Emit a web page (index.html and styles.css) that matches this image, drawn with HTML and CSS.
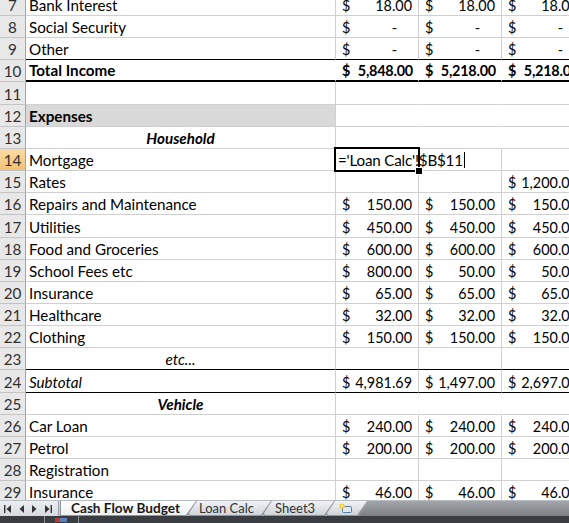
FILE: index.html
```
<!DOCTYPE html>
<html>
<head>
<meta charset="utf-8">
<link rel="stylesheet" href="styles.css">
</head>
<body>
<div class="grid">
<div class="rows">
  <div class="row"><div class="rh">7</div><div class="c">Bank Interest</div><div class="c n"><span>$</span><span>18.00</span></div><div class="c n"><span>$</span><span>18.00</span></div><div class="c n"><span>$</span><span>18.00</span></div></div>
  <div class="row"><div class="rh">8</div><div class="c">Social Security</div><div class="c n"><span>$</span><span class="dash">-</span></div><div class="c n"><span>$</span><span class="dash">-</span></div><div class="c n"><span>$</span><span class="dash">-</span></div></div>
  <div class="row kb"><div class="rh">9</div><div class="c">Other</div><div class="c n"><span>$</span><span class="dash">-</span></div><div class="c n"><span>$</span><span class="dash">-</span></div><div class="c n"><span>$</span><span class="dash">-</span></div></div>
  <div class="row kb2 bold"><div class="rh">10</div><div class="c nv">Total Income</div><div class="c n nv"><span>$</span><span>5,848.00</span></div><div class="c n nv"><span>$</span><span>5,218.00</span></div><div class="c n"><span>$</span><span>5,218.00</span></div></div>
  <div class="row"><div class="rh">11</div><div class="c"></div><div class="c nv"></div><div class="c nv"></div><div class="c"></div></div>
  <div class="row"><div class="rh">12</div><div class="c gray b">Expenses</div><div class="c nv"></div><div class="c nv"></div><div class="c"></div></div>
  <div class="row"><div class="rh">13</div><div class="c ctr b i">Household</div><div class="c nv"></div><div class="c nv"></div><div class="c"></div></div>
  <div class="row"><div class="rh sel">14</div><div class="c">Mortgage</div><div class="c edit">='Loan Calc'!$B$11<span class="caret"></span></div><div class="c"></div><div class="c"></div></div>
  <div class="row"><div class="rh">15</div><div class="c">Rates</div><div class="c"></div><div class="c"></div><div class="c n"><span>$</span><span>1,200.00</span></div></div>
  <div class="row"><div class="rh">16</div><div class="c">Repairs and Maintenance</div><div class="c n"><span>$</span><span>150.00</span></div><div class="c n"><span>$</span><span>150.00</span></div><div class="c n"><span>$</span><span>150.00</span></div></div>
  <div class="row"><div class="rh">17</div><div class="c">Utilities</div><div class="c n"><span>$</span><span>450.00</span></div><div class="c n"><span>$</span><span>450.00</span></div><div class="c n"><span>$</span><span>450.00</span></div></div>
  <div class="row"><div class="rh">18</div><div class="c">Food and Groceries</div><div class="c n"><span>$</span><span>600.00</span></div><div class="c n"><span>$</span><span>600.00</span></div><div class="c n"><span>$</span><span>600.00</span></div></div>
  <div class="row"><div class="rh">19</div><div class="c">School Fees etc</div><div class="c n"><span>$</span><span>800.00</span></div><div class="c n"><span>$</span><span>50.00</span></div><div class="c n"><span>$</span><span>50.00</span></div></div>
  <div class="row"><div class="rh">20</div><div class="c">Insurance</div><div class="c n"><span>$</span><span>65.00</span></div><div class="c n"><span>$</span><span>65.00</span></div><div class="c n"><span>$</span><span>65.00</span></div></div>
  <div class="row"><div class="rh">21</div><div class="c">Healthcare</div><div class="c n"><span>$</span><span>32.00</span></div><div class="c n"><span>$</span><span>32.00</span></div><div class="c n"><span>$</span><span>32.00</span></div></div>
  <div class="row"><div class="rh">22</div><div class="c">Clothing</div><div class="c n"><span>$</span><span>150.00</span></div><div class="c n"><span>$</span><span>150.00</span></div><div class="c n"><span>$</span><span>150.00</span></div></div>
  <div class="row kb"><div class="rh">23</div><div class="c ctr i">etc...</div><div class="c"></div><div class="c"></div><div class="c"></div></div>
  <div class="row kb"><div class="rh">24</div><div class="c i">Subtotal</div><div class="c n"><span>$</span><span>4,981.69</span></div><div class="c n"><span>$</span><span>1,497.00</span></div><div class="c n"><span>$</span><span>2,697.00</span></div></div>
  <div class="row"><div class="rh">25</div><div class="c ctr b i">Vehicle</div><div class="c nv"></div><div class="c nv"></div><div class="c"></div></div>
  <div class="row"><div class="rh">26</div><div class="c">Car Loan</div><div class="c n"><span>$</span><span>240.00</span></div><div class="c n"><span>$</span><span>240.00</span></div><div class="c n"><span>$</span><span>240.00</span></div></div>
  <div class="row"><div class="rh">27</div><div class="c">Petrol</div><div class="c n"><span>$</span><span>200.00</span></div><div class="c n"><span>$</span><span>200.00</span></div><div class="c n"><span>$</span><span>200.00</span></div></div>
  <div class="row"><div class="rh">28</div><div class="c">Registration</div><div class="c"></div><div class="c"></div><div class="c"></div></div>
  <div class="row"><div class="rh">29</div><div class="c">Insurance</div><div class="c n"><span>$</span><span>46.00</span></div><div class="c n"><span>$</span><span>46.00</span></div><div class="c n"><span>$</span><span>46.00</span></div></div>
</div>
</div>
<div class="tabbar">
  <div class="nav">
    <svg width="7" height="8" viewBox="0 0 7 8"><rect x="0" y="0" width="1.4" height="8" fill="#333"/><path d="M7 0 L2.5 4 L7 8 Z" fill="#333"/></svg>
    <svg width="5" height="8" viewBox="0 0 5 8"><path d="M5 0 L0.5 4 L5 8 Z" fill="#333"/></svg>
    <svg width="5" height="8" viewBox="0 0 5 8"><path d="M0 0 L4.5 4 L0 8 Z" fill="#333"/></svg>
    <svg width="7" height="8" viewBox="0 0 7 8"><path d="M0 0 L4.5 4 L0 8 Z" fill="#333"/><rect x="5.6" y="0" width="1.4" height="8" fill="#333"/></svg>
  </div>
  <div class="tabs">
    <div class="tab active"><div class="tab-in">Cash Flow Budget</div></div>
    <div class="tab t2"><div class="tab-in">Loan Calc</div></div>
    <div class="tab t3"><div class="tab-in">Sheet3</div></div>
    <div class="tab t4"><div class="tab-in"><svg width="13" height="10" viewBox="0 0 13 10"><rect x="3.5" y="3.5" width="9" height="6" rx="1" fill="#dfe8f3" stroke="#5a7aa0"/><circle cx="3" cy="3" r="2.6" fill="#f5c400"/><path d="M3 0.3 V5.7 M0.3 3 H5.7" stroke="#fff6c0" stroke-width="0.8"/></svg></div></div>
  </div>
  <div class="fill"></div>
</div>
<div class="status"><span class="tick t-a"></span><span class="ico"></span><span class="tick t-b"></span></div>
</body>
</html>
```
FILE: styles.css
```
* { box-sizing: border-box; }
body {
  margin: 0;
  width: 569px;
  height: 523px;
  overflow: hidden;
  background: #fff;
  font-family: Lato, "Liberation Sans", sans-serif;
  color: #000;
}
.grid { height: 500px; overflow: hidden; }
.rows { margin-top: -6.2px; }
.row {
  display: grid;
  grid-template-columns: 26px 310px 83px 83px 83px;
  height: 22.17px;
}
.row > div {
  border-right: 1px solid #d0d0d0;
  border-bottom: 1px solid #d0d0d0;
  display: flex;
  align-items: flex-end;
  white-space: nowrap;
  font-size: 15.2px;
  line-height: 17px;
  padding-bottom: 1px;
}
.rh {
  background: #e8e8e8;
  border-right-color: #a3a3a3 !important;
  border-bottom-color: #c4c4c4 !important;
  justify-content: center;
  color: #303030;
}
.rh.sel { background: linear-gradient(#fadba6, #f2c175); }
.c { padding-left: 3px; padding-right: 3px; overflow: hidden; }
.row > .n {
  justify-content: space-between;
  padding-left: 6px;
  padding-right: 6px;
  font-size: 14.4px;
}
.row.bold > .n { letter-spacing: -0.2px; padding-right: 5px; }
.dash { padding-right: 15px; }
.kb > .c { border-bottom-color: #000; }
.kb2 > .c { border-bottom: 2px solid #000; }
.nv { border-right-color: #fff !important; }
.bold .c, .b { font-weight: bold; }
.i { font-style: italic; }
.ctr { justify-content: center; }
.gray { background: #d9d9d9; }
.row > .edit {
  position: relative;
  overflow: visible;
  z-index: 1;
  padding-left: 2px;
  letter-spacing: -0.2px;
}
.edit::before {
  content: "";
  position: absolute;
  z-index: -1;
  left: -2px; top: -2px; right: -2px; bottom: -2px;
  border: 2px solid #000;
}
.edit::after {
  content: "";
  position: absolute;
  right: -5px; bottom: -5px;
  width: 6px; height: 6px;
  background: #000;
  border: 1px solid #fff;
}
.caret {
  display: inline-block;
  flex-shrink: 0;
  width: 1px;
  height: 16px;
  background: #000;
  margin-left: 1px;
  align-self: flex-end;
  margin-bottom: 1px;
}
.tabbar {
  height: 16px;
  display: flex;
  background: linear-gradient(#dfe2e6, #c3c8ce);
  border-top: 1px solid #b8bdc4;
}
.nav {
  width: 59px;
  display: flex;
  align-items: center;
  justify-content: space-between;
  padding: 0 6px 0 4px;
  background: linear-gradient(#eceef1, #d5d9de);
  border-right: 1px solid #9aa1a9;
}
.tabs { display: flex; height: 15px; }
.tab {
  position: relative;
  height: 15px;
  background: #8e959d;
  clip-path: polygon(0 0, 100% 0, calc(100% - 10px) 100%, 10px 100%);
  margin-left: -18px;
}
.tab-in {
  height: 14px;
  margin: 0 1px;
  display: flex;
  align-items: center;
  font-size: 13px;
  color: #333;
  background: linear-gradient(#f1f2f4, #cfd4da);
  clip-path: polygon(0 0, 100% 0, calc(100% - 10px) 100%, 10px 100%);
}
.tab.active {
  z-index: 4;
  margin-left: 1px;
  clip-path: polygon(0 0, 100% 0, calc(100% - 10px) 100%, 0 100%);
}
.tab.active .tab-in {
  background: linear-gradient(#ffffff, #eeeff1);
  font-weight: bold;
  font-size: 13.6px;
  color: #1a1a1a;
  padding: 0 16px 0 10px;
  clip-path: polygon(0 0, 100% 0, calc(100% - 10px) 100%, 0 100%);
}
.t2 { z-index: 3; }
.t3 { z-index: 2; }
.t4 { z-index: 1; }
.t2 .tab-in { padding: 0 17px 0 19px; }
.t3 .tab-in { padding: 0 19px 0 20px; }
.t4 .tab-in { padding: 0 15px 0 21px; }
.fill {
  flex: 1;
  background: linear-gradient(#a3a6aa, #7b7e82);
  margin-left: -10px;
  clip-path: polygon(10px 0, 100% 0, 100% 100%, 0 100%);
}
.status {
  height: 7px;
  background: #393c40;
  display: flex;
  align-items: flex-start;
}
.tick { width: 1px; height: 7px; background: #8a8d91; }
.t-a { margin-left: 44px; }
.ico { width: 12px; height: 4px; margin-left: 10px; margin-top: 2px; background: linear-gradient(90deg, #c0392b 0 40%, #5b7fbf 40% 100%); }
.t-b { margin-left: 11px; }
```
